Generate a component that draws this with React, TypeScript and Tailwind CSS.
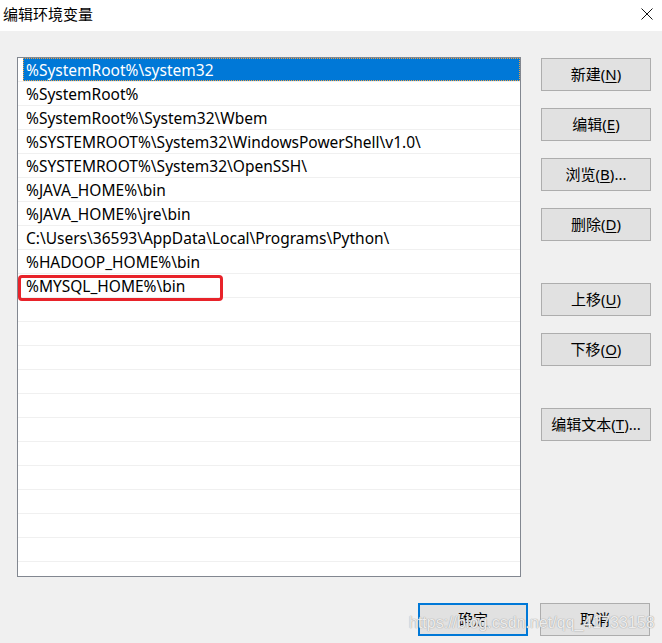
import React from 'react';

const FONT = { fontFamily: '"Noto Sans", "Noto Sans CJK SC", sans-serif' };

const PATHS = [
  '%SystemRoot%\\system32',
  '%SystemRoot%',
  '%SystemRoot%\\System32\\Wbem',
  '%SYSTEMROOT%\\System32\\WindowsPowerShell\\v1.0\\',
  '%SYSTEMROOT%\\System32\\OpenSSH\\',
  '%JAVA_HOME%\\bin',
  '%JAVA_HOME%\\jre\\bin',
  'C:\\Users\\36593\\AppData\\Local\\Programs\\Python\\',
  '%HADOOP_HOME%\\bin',
  '%MYSQL_HOME%\\bin',
];

const EMPTY_ROWS = 12;

const WinButton: React.FC<{ label: string; hot?: string; tail?: string; primary?: boolean }> = ({
  label,
  hot,
  tail = '',
  primary = false,
}) => (
  <button
    className={`w-[110px] h-[33px] bg-[#e1e1e1] text-[15px] text-black flex items-center justify-center leading-none ${
      primary ? 'border-2 border-[#0078d7]' : 'border border-[#adadad]'
    }`}
  >
    {label}
    {hot && (
      <>
        (<span className="underline underline-offset-2">{hot}</span>)
      </>
    )}
    {tail}
  </button>
);

export default function App() {
  return (
    <div className="w-[662px] h-[643px] flex flex-col bg-[#f0f0f0] relative overflow-hidden" style={FONT}>
      {/* title bar */}
      <div className="h-[31px] bg-white flex items-center justify-between pl-[3px] pr-[9px]">
        <span className="text-[15px] text-black leading-none -mt-[3px]">编辑环境变量</span>
        <svg width="12" height="12" viewBox="0 0 12 12" className="-mt-[4px]">
          <path d="M0.5 0.5 L11.5 11.5 M11.5 0.5 L0.5 11.5" stroke="#111" strokeWidth="1" fill="none" />
        </svg>
      </div>

      <div className="flex pt-[26px] pl-[17px]">
        {/* list */}
        <div className="w-[504px] h-[520px] bg-white border border-[#828790] relative overflow-hidden">
          {PATHS.map((p, i) => (
            <div key={i} className="h-[24px] border-b border-[#f0f0f0] pl-[5px]">
              <div
                className={`h-full flex items-center pl-[3px] pt-[2px] text-[15.5px] whitespace-nowrap ${
                  i === 0 ? 'bg-[#0078d7] text-white outline outline-1 outline-dotted outline-[#f0a040] -outline-offset-1' : 'text-black'
                }`}
              >
                {p}
              </div>
            </div>
          ))}
          {Array.from({ length: EMPTY_ROWS }).map((_, i) => (
            <div key={`e${i}`} className="h-[24px] border-b border-[#f0f0f0]" />
          ))}
          {/* red annotation box */}
          <div className="absolute left-[0px] top-[217px] w-[205px] h-[26px] border-[3px] border-[#e8232a] rounded-[4px]" />
        </div>

        {/* right buttons */}
        <div className="flex flex-col ml-[20px] pt-[1px]">
          <div className="flex flex-col gap-[17px]">
            <WinButton label="新建" hot="N" />
            <WinButton label="编辑" hot="E" />
            <WinButton label="浏览" hot="B" tail="..." />
            <WinButton label="删除" hot="D" />
          </div>
          <div className="flex flex-col gap-[17px] mt-[42px]">
            <WinButton label="上移" hot="U" />
            <WinButton label="下移" hot="O" />
          </div>
          <div className="mt-[42px]">
            <WinButton label="编辑文本" hot="T" tail="..." />
          </div>
        </div>
      </div>

      {/* bottom buttons */}
      <div className="flex justify-end gap-[12px] pr-[12px] mt-[26px]">
        <WinButton label="确定" primary />
        <WinButton label="取消" />
      </div>

      {/* watermark */}
      <div
        className="absolute left-[409px] top-[615px] text-[16px] leading-none text-white/80 whitespace-nowrap"
        style={{ fontFamily: '"Liberation Sans", sans-serif', textShadow: '0 0 1px #a0a0a0, 0 0 1px #a0a0a0' }}
      >
        https://blog.csdn.net/qq_41733158
      </div>
    </div>
  );
}
